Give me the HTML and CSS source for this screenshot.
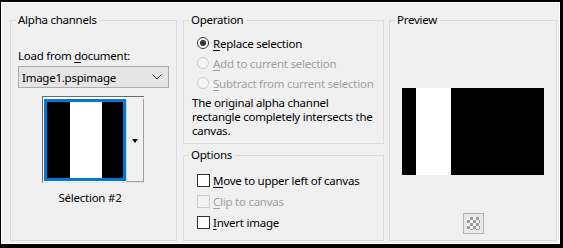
FILE: index.html
```html
<!DOCTYPE html>
<html>
<head>
<meta charset="utf-8">
<link rel="stylesheet" href="styles.css">
</head>
<body>
<div class="dialog">
  <fieldset class="group group-alpha">
    <legend>Alpha channels</legend>
    <div class="alpha-body">
      <div class="label">Load from <u>d</u>ocument:</div>
      <div class="combo">
        <span>Image1.pspimage</span>
        <svg class="chev" width="10" height="6" viewBox="0 0 10 6"><polyline points="0.5,0.5 5,5 9.5,0.5" fill="none" stroke="#333" stroke-width="1"/></svg>
      </div>
      <div class="thumb">
        <div class="thumb-main">
          <div class="thumb-sel">
            <div class="bar black w23"></div>
            <div class="bar white w32"></div>
            <div class="bar black grow"></div>
          </div>
        </div>
        <div class="thumb-drop"><span class="tri"></span></div>
      </div>
      <div class="caption">Sélection #2</div>
    </div>
  </fieldset>

  <div class="middle">
    <fieldset class="group group-op">
      <legend>Operation</legend>
      <div class="op-body">
        <div class="row"><span class="radio checked"></span><span><u>R</u>eplace selection</span></div>
        <div class="row disabled"><span class="radio"></span><span><u>A</u>dd to current selection</span></div>
        <div class="row disabled"><span class="radio"></span><span><u>S</u>ubtract from current selection</span></div>
        <p class="desc">The original alpha channel<br>rectangle completely intersects the<br>canvas.</p>
      </div>
    </fieldset>
    <fieldset class="group group-opt">
      <legend>Options</legend>
      <div class="opt-body">
        <div class="crow"><span class="check"></span><span><u>M</u>ove to upper left of canvas</span></div>
        <div class="crow disabled"><span class="check"></span><span><u>C</u>lip to canvas</span></div>
        <div class="crow"><span class="check"></span><span><u>I</u>nvert image</span></div>
      </div>
    </fieldset>
  </div>

  <fieldset class="group group-prev">
    <legend>Preview</legend>
    <div class="prev-body">
      <div class="preview">
        <div class="bar black w14"></div>
        <div class="bar white w35"></div>
        <div class="bar black grow"></div>
      </div>
      <div class="checker-btn"><div class="checker"></div></div>
    </div>
  </fieldset>
</div>
</body>
</html>
```

FILE: styles.css
```css
html, body {
  margin: 0;
  padding: 0;
  background: #000;
}
body {
  width: 563px;
  height: 248px;
  overflow: hidden;
  font-family: "Noto Sans", "Open Sans", sans-serif;
  font-size: 11.5px;
  letter-spacing: -0.25px;
  line-height: 15px;
  color: #000;
}
u { text-decoration: underline; text-underline-offset: 2px; }

.dialog {
  box-sizing: border-box;
  margin: 2px 3px 0 1px;
  height: 242px;
  border: 1px solid #fff;
  background: #f0f0f0;
  padding: 9px 2px 2px 8px;
  display: flex;
  align-items: stretch;
}

.group {
  box-sizing: border-box;
  margin: 0;
  padding: 0;
  border: 1px solid #dcdcdc;
  min-width: 0;
}
.group legend {
  margin-left: 5px;
  padding: 0 3px 0 2px;
  line-height: 16px;
}

.group-alpha { width: 167px; }
.middle {
  width: 201px;
  margin-left: 6px;
  display: flex;
  flex-direction: column;
  gap: 3px;
}
.group-op { height: 132px; }
.group-opt { flex: 1; }
.group-prev { width: 168px; margin-left: 5px; }

/* Alpha channels */
.alpha-body {
  display: flex;
  flex-direction: column;
  padding-left: 7px;
}
.label { margin-top: 20px; }
.combo {
  box-sizing: border-box;
  margin-top: 3px;
  width: 151px;
  height: 22px;
  border: 1px solid #adadad;
  background: #e5e5e5;
  display: flex;
  align-items: center;
  justify-content: space-between;
  padding: 0 6px 0 3px;
}
.chev { display: block; }

.thumb {
  box-sizing: border-box;
  margin-top: 8px;
  margin-left: 24px;
  width: 102px;
  height: 87px;
  display: flex;
  border-top: 1px solid #6b6b6b;
  border-left: 1px solid #6b6b6b;
  border-bottom: 1px solid #e3e3e3;
}
.thumb-main {
  background: #fff;
  padding: 2px 0 0 1px;
}
.thumb-sel {
  box-sizing: border-box;
  width: 82px;
  height: 82px;
  border: 3px solid #0078d7;
  display: flex;
}
.bar { height: 100%; }
.black { background: #000; }
.white { background: #fff; }
.w23 { width: 23px; }
.w32 { width: 32px; }
.w14 { width: 14px; }
.w35 { width: 35px; }
.grow { flex: 1; }

.thumb-drop {
  box-sizing: border-box;
  flex: 1;
  background: #f2f2f2;
  border-left: 1px solid #cfcfcf;
  border-right: 1px solid #a0a0a0;
  border-bottom: 1px solid #a0a0a0;
  margin-top: 2px;
  display: flex;
  align-items: center;
  justify-content: center;
}
.tri {
  width: 0;
  height: 0;
  border-left: 3.5px solid transparent;
  border-right: 3.5px solid transparent;
  border-top: 4px solid #000;
  margin-top: 2px;
}
.caption {
  margin-top: 7px;
  width: 136px;
  text-align: center;
  margin-left: 4px;
}

/* Operation */
.op-body {
  padding-left: 13px;
  padding-top: 5px;
}
.row, .crow {
  display: flex;
  align-items: center;
  height: 20px;
}
.crow { height: 21px; }
.disabled { color: #a0a0a0; }
.radio {
  box-sizing: border-box;
  width: 12px;
  height: 12px;
  border-radius: 50%;
  border: 1px solid #333;
  background: #fff;
  margin-right: 4px;
  display: flex;
  align-items: center;
  justify-content: center;
}
.radio.checked::after {
  content: "";
  width: 6px;
  height: 6px;
  border-radius: 50%;
  background: #333;
}
.disabled .radio {
  border-color: #cccccc;
  background: #f4f4f4;
}
.desc {
  margin: 3px 0 0 -5px;
  line-height: 14px;
}

/* Options */
.opt-body {
  padding-left: 13px;
  padding-top: 7px;
}
.check {
  box-sizing: border-box;
  width: 13px;
  height: 13px;
  border: 1px solid #333;
  background: #fff;
  margin-right: 3px;
}
.disabled .check {
  border-color: #cccccc;
  background: #f0f0f0;
}

/* Preview */
.prev-body {
  display: flex;
  flex-direction: column;
  align-items: center;
}
.preview {
  margin-top: 60px;
  width: 142px;
  height: 87px;
  display: flex;
}
.checker-btn {
  box-sizing: border-box;
  margin-top: 38px;
  width: 21px;
  height: 21px;
  border: 1px solid #b4b4b4;
  background: #e8e8e8;
  padding: 3px;
}
.checker {
  width: 13px;
  height: 13px;
  background-color: #f4f4f4;
  background-image:
    linear-gradient(45deg, #9a9a9a 25%, transparent 25%, transparent 75%, #9a9a9a 75%),
    linear-gradient(45deg, #9a9a9a 25%, transparent 25%, transparent 75%, #9a9a9a 75%);
  background-size: 6px 6px;
  background-position: 0 0, 3px 3px;
}
```
